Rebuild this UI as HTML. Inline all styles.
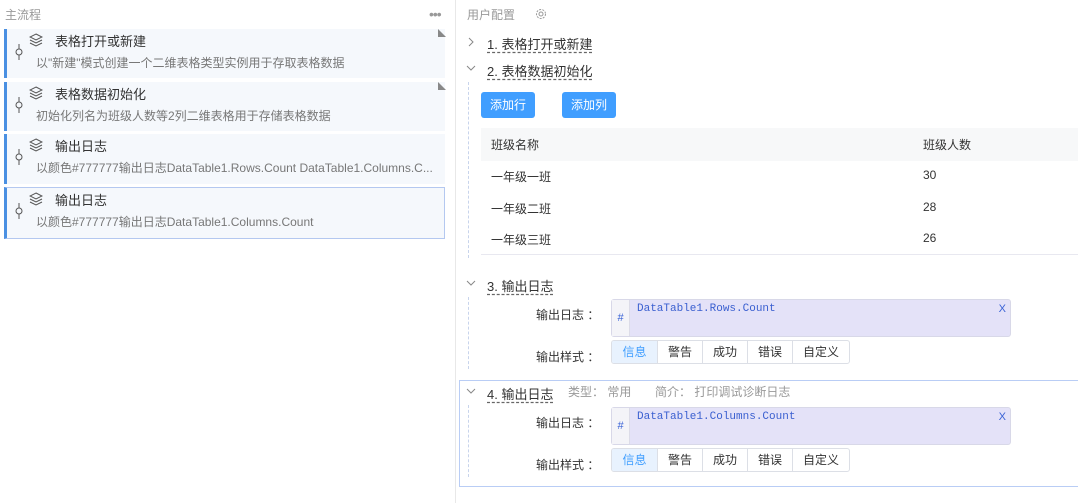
<!DOCTYPE html><html><head><meta charset="utf-8"><style>
*{box-sizing:border-box;margin:0;padding:0}
body{width:1078px;height:503px;overflow:hidden;background:#fff;font-family:"Liberation Sans","Noto Sans CJK SC",sans-serif;font-size:12px;color:#333;position:relative}
.a{position:absolute;white-space:nowrap}
.card{position:absolute;left:4px;width:441px;background:#f5f8fc;border-left:3px solid #4a90e2}
.card .t{position:absolute;left:48px;top:2px;font-size:13px;color:#333}
.card .d{position:absolute;left:29px;top:25px;font-size:12px;color:#777}
.card svg{position:absolute}
.hd{font-size:13px;color:#333;text-decoration:underline dashed #666;text-underline-offset:3px}
.btn{position:absolute;background:#409eff;color:#fff;border-radius:3px;width:54px;height:26px;line-height:26px;text-align:center;font-size:12px}
.ta{position:absolute;left:611px;width:400px;height:38px;border:1px solid #d8d8e8;border-radius:3px;background:#e4e2f8}
.ta .h{position:absolute;left:0;top:0;width:18px;height:36px;background:#f4f4f8;border-right:1px solid #dcdce8;color:#3a63d6;font-size:11px;line-height:36px;text-align:center}
.ta .v{position:absolute;left:25px;top:3px;font-family:"Liberation Mono",monospace;font-size:11px;color:#3a5fd0}
.ta .x{position:absolute;right:4px;top:3px;color:#3a63d6;font-size:11px}
.bg{position:absolute;left:611px;height:24px;display:flex;border:1px solid #dcdfe6;border-radius:3px;overflow:hidden}
.bg span{width:45px;text-align:center;line-height:22px;font-size:12px;color:#333;border-left:1px solid #dcdfe6}
.bg span:first-child{border-left:none;background:#e8f2fe;color:#409eff}
.bg span:last-child{width:57px}
.lb{position:absolute;left:536px;font-size:12px;color:#333}
.dash{position:absolute;left:468px;border-left:1px dashed #c8d4ec;width:0}
.chev{position:absolute}
</style></head><body>
<div class="a" style="left:5px;top:6px;color:#999;font-size:12px">主流程</div>
<div class="a" style="left:429px;top:6px;color:#999;font-size:14px;letter-spacing:-1px">•••</div>
<div style="position:absolute;left:455px;top:0;width:1px;height:503px;background:#e8e8e8"></div>

<div class="card" style="top:29px;height:49px"><svg style="left:22px;top:4px" width="14" height="14" viewBox="0 0 14 14" fill="none" stroke="#555" stroke-width="1"><path d="M7 1L13 4 7 7 1 4z"/><path d="M1 7l6 3 6-3"/><path d="M1 10l6 3 6-3"/></svg><svg style="left:7px;top:15px" width="10" height="16"><path d="M5 0v5M5 11v5" stroke="#555"/><circle cx="5" cy="8" r="3" fill="none" stroke="#555"/></svg><div class="t">表格打开或新建</div><div class="d">以"新建"模式创建一个二维表格类型实例用于存取表格数据</div><svg style="left:431px;top:0" width="8" height="8"><path d="M0 0L8 8H0z" fill="#888"/></svg></div>
<div class="card" style="top:82px;height:49px"><svg style="left:22px;top:4px" width="14" height="14" viewBox="0 0 14 14" fill="none" stroke="#555" stroke-width="1"><path d="M7 1L13 4 7 7 1 4z"/><path d="M1 7l6 3 6-3"/><path d="M1 10l6 3 6-3"/></svg><svg style="left:7px;top:15px" width="10" height="16"><path d="M5 0v5M5 11v5" stroke="#555"/><circle cx="5" cy="8" r="3" fill="none" stroke="#555"/></svg><div class="t">表格数据初始化</div><div class="d">初始化列名为班级人数等2列二维表格用于存储表格数据</div><svg style="left:431px;top:0" width="8" height="8"><path d="M0 0L8 8H0z" fill="#888"/></svg></div>
<div class="card" style="top:134px;height:50px"><svg style="left:22px;top:4px" width="14" height="14" viewBox="0 0 14 14" fill="none" stroke="#555" stroke-width="1"><path d="M7 1L13 4 7 7 1 4z"/><path d="M1 7l6 3 6-3"/><path d="M1 10l6 3 6-3"/></svg><svg style="left:7px;top:15px" width="10" height="16"><path d="M5 0v5M5 11v5" stroke="#555"/><circle cx="5" cy="8" r="3" fill="none" stroke="#555"/></svg><div class="t">输出日志</div><div class="d">以颜色#777777输出日志DataTable1.Rows.Count DataTable1.Columns.C...</div></div>
<div class="card" style="top:187px;height:52px;border:1px solid #b4c8f0;border-left:3px solid #4a90e2"><svg style="left:22px;top:4px" width="14" height="14" viewBox="0 0 14 14" fill="none" stroke="#555" stroke-width="1"><path d="M7 1L13 4 7 7 1 4z"/><path d="M1 7l6 3 6-3"/><path d="M1 10l6 3 6-3"/></svg><svg style="left:7px;top:15px" width="10" height="16"><path d="M5 0v5M5 11v5" stroke="#555"/><circle cx="5" cy="8" r="3" fill="none" stroke="#555"/></svg><div class="t">输出日志</div><div class="d">以颜色#777777输出日志DataTable1.Columns.Count</div></div>

<div class="a" style="left:467px;top:6px;color:#999">用户配置</div>
<svg style="position:absolute;left:535px;top:8px" width="12" height="12" viewBox="0 0 12 12" fill="none" stroke="#999"><circle cx="6" cy="6" r="2"/><circle cx="6" cy="6" r="4.5" stroke-dasharray="2 1.2"/></svg>
<svg class="chev" style="left:467px;top:37px" width="8" height="10"><path d="M2 1l4 4-4 4" fill="none" stroke="#888"/></svg>
<div class="a hd" style="left:487px;top:34px">1. 表格打开或新建</div>
<svg class="chev" style="left:466px;top:64px" width="10" height="8"><path d="M1 2l4 4 4-4" fill="none" stroke="#888"/></svg>
<div class="a hd" style="left:487px;top:61px">2. 表格数据初始化</div>
<div class="dash" style="top:82px;height:176px"></div>
<div class="btn" style="left:481px;top:92px">添加行</div>
<div class="btn" style="left:562px;top:92px">添加列</div>
<div style="position:absolute;left:481px;top:128px;width:597px;height:33px;background:#f7f8f9"></div>
<div class="a" style="left:491px;top:136px">班级名称</div><div class="a" style="left:923px;top:136px">班级人数</div>
<div class="a" style="left:491px;top:168px">一年级一班</div><div class="a" style="left:923px;top:168px">30</div>
<div class="a" style="left:491px;top:200px">一年级二班</div><div class="a" style="left:923px;top:200px">28</div>
<div class="a" style="left:491px;top:231px">一年级三班</div><div class="a" style="left:923px;top:231px">26</div>
<div style="position:absolute;left:481px;top:254px;width:597px;height:1px;background:#e8e8f0"></div>

<svg class="chev" style="left:466px;top:279px" width="10" height="8"><path d="M1 2l4 4 4-4" fill="none" stroke="#888"/></svg>
<div class="a hd" style="left:487px;top:276px">3. 输出日志</div>
<div class="dash" style="top:297px;height:72px"></div>
<div class="lb" style="top:306px">输出日志 ：</div>
<div class="ta" style="top:299px"><div class="h">#</div><div class="v">DataTable1.Rows.Count</div><div class="x">X</div></div>
<div class="lb" style="top:348px">输出样式 ：</div>
<div class="bg" style="top:340px"><span>信息</span><span>警告</span><span>成功</span><span>错误</span><span>自定义</span></div>

<div style="position:absolute;left:459px;top:380px;width:630px;height:107px;border:1px solid #b9cdf5"></div>
<svg class="chev" style="left:466px;top:387px" width="10" height="8"><path d="M1 2l4 4 4-4" fill="none" stroke="#888"/></svg>
<div class="a hd" style="left:487px;top:384px">4. 输出日志</div>
<div class="a" style="left:568px;top:383px;color:#999">类型： 常用</div>
<div class="a" style="left:655px;top:383px;color:#999">简介： 打印调试诊断日志</div>
<div class="dash" style="top:405px;height:72px"></div>
<div class="lb" style="top:414px">输出日志 ：</div>
<div class="ta" style="top:407px"><div class="h">#</div><div class="v">DataTable1.Columns.Count</div><div class="x">X</div></div>
<div class="lb" style="top:456px">输出样式 ：</div>
<div class="bg" style="top:448px"><span>信息</span><span>警告</span><span>成功</span><span>错误</span><span>自定义</span></div>
</body></html>
